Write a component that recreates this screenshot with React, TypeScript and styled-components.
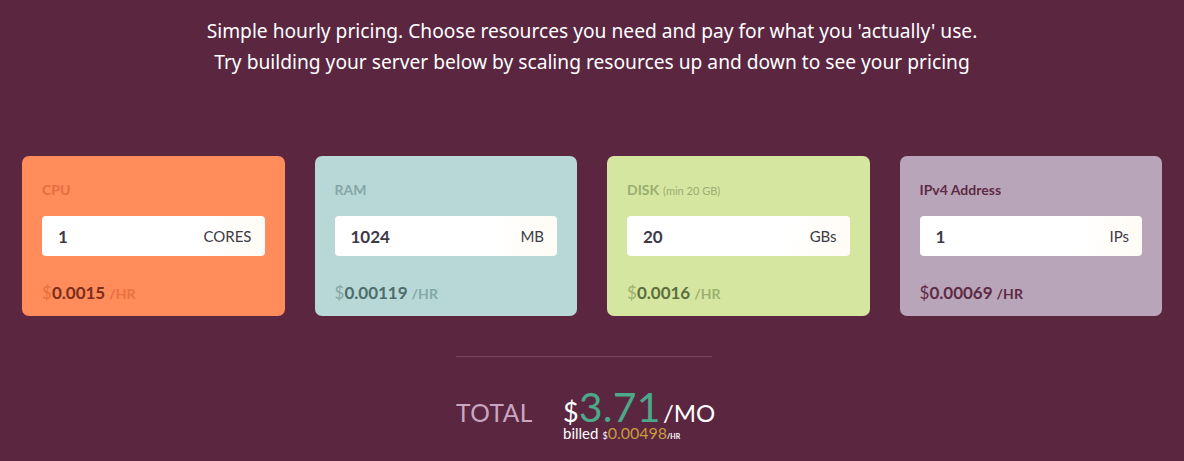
import React from "react";
import styled, { createGlobalStyle } from "styled-components";

const Global = createGlobalStyle`
  html, body { margin: 0; padding: 0; background: #5b2640; }
  body { font-family: "Noto Sans", "Open Sans", sans-serif; }
  * { box-sizing: border-box; }
`;

const Page = styled.div`
  width: 1184px;
  height: 461px;
  background: #5b2640;
  overflow: hidden;
  padding-top: 15px;
`;

const Intro = styled.p`
  margin: 0;
  text-align: center;
  color: #ffffff;
  font-family: "Noto Sans", sans-serif;
  font-size: 19.2px;
  line-height: 31px;
`;

const Cards = styled.div`
  display: grid;
  grid-template-columns: repeat(4, 1fr);
  gap: 30px;
  padding: 0 22px;
  margin-top: 79px;
`;

type Tone = {
  bg: string;
  label: string;
  value: string;
  dim: string;
};

const Card = styled.div<{ $tone: Tone }>`
  height: 160px;
  border-radius: 7px;
  background: ${(p) => p.$tone.bg};
  padding: 26px 20px 0 20px;
  font-family: "Lato", "Noto Sans", sans-serif;
  display: flex;
  flex-direction: column;
`;

const Label = styled.div<{ $c: string }>`
  color: ${(p) => p.$c};
  font-size: 14px;
  font-weight: 700;
  line-height: 16px;
  height: 16px;
  display: flex;
  align-items: baseline;
  gap: 4px;
`;

const Note = styled.span`
  font-weight: 400;
  font-size: 11px;
`;

const Field = styled.div`
  margin-top: 18px;
  height: 40px;
  border-radius: 4px;
  background: linear-gradient(100deg, #ffffff 0%, #ffffff 70%, #fffbf5 100%);
  display: flex;
  align-items: center;
  justify-content: space-between;
  padding: 0 13px 0 16px;
`;

const Amount = styled.span`
  color: #3c3a48;
  font-size: 17px;
  font-weight: 700;
`;

const Unit = styled.span`
  color: #3c3a44;
  font-size: 15px;
  font-weight: 400;
`;

const Price = styled.div<{ $c: string; $dim: string }>`
  margin-top: 26px;
  font-size: 17px;
  font-weight: 700;
  color: ${(p) => p.$c};
  .cur { color: ${(p) => p.$dim}; font-weight: 400; }
  .per { color: ${(p) => p.$dim}; font-size: 14px; margin-left: 4px; }
`;

const Summary = styled.div`
  width: 256px;
  margin: 40px auto 0;
  position: relative;
  left: -8px;
`;

const Rule = styled.div`
  height: 1px;
  background: #7a4563;
`;

const TotalRow = styled.div`
  display: flex;
  align-items: flex-start;
  margin-top: 30px;
  font-family: "Lato", "Noto Sans", sans-serif;
`;

const TotalLabel = styled.div`
  flex-shrink: 0;
  color: #c9a6c2;
  font-size: 24.5px;
  letter-spacing: 0.5px;
  margin-top: 11px;
  width: 107px;
`;

const Figures = styled.div`
  flex-shrink: 0;
  display: flex;
  flex-direction: column;
`;

const Monthly = styled.div`
  display: flex;
  align-items: baseline;
  color: #ffffff;
  line-height: 34px;
  height: 34px;
  margin-top: 3px;
  white-space: nowrap;
`;

const Sym = styled.span`
  font-size: 27px;
`;

const Big = styled.span`
  font-size: 41px;
  color: #4ba888;
  letter-spacing: 0.3px;
`;

const Per = styled.span`
  font-size: 24px;
  margin-left: 2px;
`;

const Billed = styled.div`
  color: #ffffff;
  font-size: 15px;
  line-height: 16px;
  margin-top: 1px;
  white-space: nowrap;
  .s { font-size: 9px; margin-left: 4px; }
  .v { color: #c99a3e; font-size: 16px; }
  .h { font-size: 7px; font-weight: 700; }
`;

const items: {
  label: string;
  note?: string;
  amount: string;
  unit: string;
  price: string;
  tone: Tone;
}[] = [
  {
    label: "CPU",
    amount: "1",
    unit: "CORES",
    price: "0.0015",
    tone: { bg: "#ff8c5a", label: "#e66c42", value: "#7a2e1c", dim: "#e9703f" },
  },
  {
    label: "RAM",
    amount: "1024",
    unit: "MB",
    price: "0.00119",
    tone: { bg: "#b8d8d8", label: "#86a6a6", value: "#4c6d6c", dim: "#85a7a6" },
  },
  {
    label: "DISK",
    note: "(min 20 GB)",
    amount: "20",
    unit: "GBs",
    price: "0.0016",
    tone: { bg: "#d5e6a1", label: "#9aae6f", value: "#5c6e3c", dim: "#9cb16e" },
  },
  {
    label: "IPv4 Address",
    amount: "1",
    unit: "IPs",
    price: "0.00069",
    tone: { bg: "#b9a5ba", label: "#5e2b45", value: "#5e2b45", dim: "#5e2b45" },
  },
];

export default function App() {
  return (
    <Page>
      <Global />
      <Intro>
        Simple hourly pricing. Choose resources you need and pay for what you 'actually' use.
        <br />
        Try building your server below by scaling resources up and down to see your pricing
      </Intro>
      <Cards>
        {items.map((it) => (
          <Card key={it.label} $tone={it.tone}>
            <Label $c={it.tone.label}>
              {it.label}
              {it.note && <Note>{it.note}</Note>}
            </Label>
            <Field>
              <Amount>{it.amount}</Amount>
              <Unit>{it.unit}</Unit>
            </Field>
            <Price $c={it.tone.value} $dim={it.tone.dim}>
              <span className="cur">$</span>
              {it.price}
              <span className="per">/HR</span>
            </Price>
          </Card>
        ))}
      </Cards>
      <Summary>
        <Rule />
        <TotalRow>
          <TotalLabel>TOTAL</TotalLabel>
          <Figures>
            <Monthly>
              <Sym>$</Sym>
              <Big>3.71</Big>
              <Per>/MO</Per>
            </Monthly>
            <Billed>
              billed<span className="s">$</span>
              <span className="v">0.00498</span>
              <span className="h">/HR</span>
            </Billed>
          </Figures>
        </TotalRow>
      </Summary>
    </Page>
  );
}
